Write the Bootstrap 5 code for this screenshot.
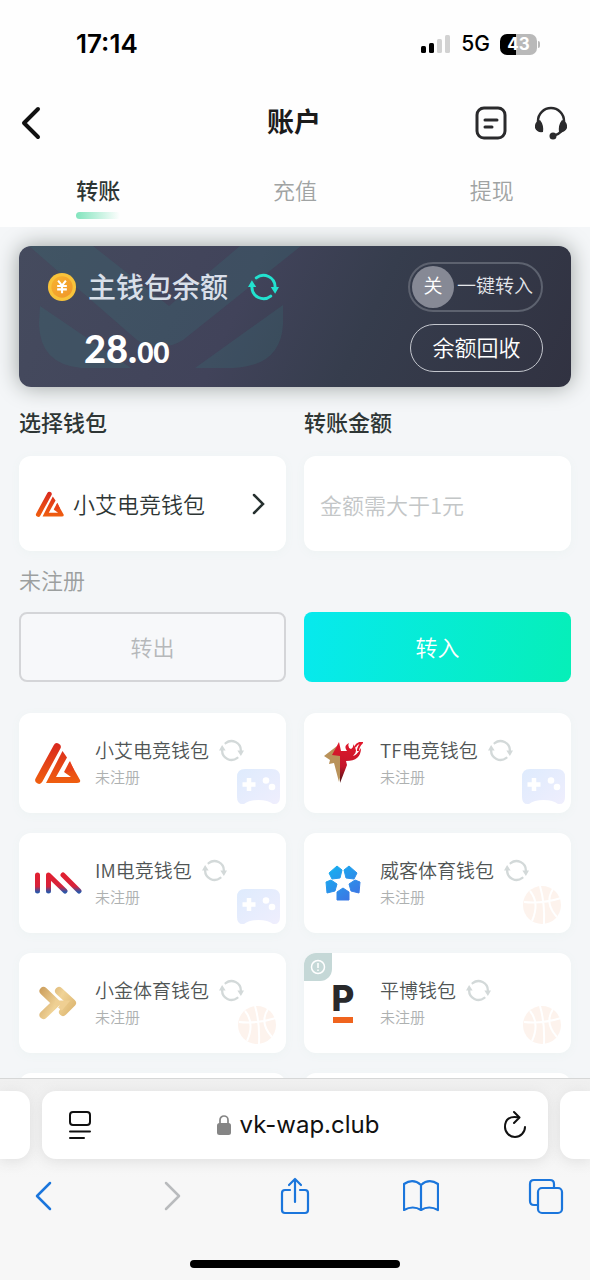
<!DOCTYPE html>
<html lang="zh-CN">
<head>
<meta charset="utf-8">
<meta name="viewport" content="width=device-width, initial-scale=1">
<title>账户</title>
<link href="https://cdn.jsdelivr.net/npm/bootstrap@5.3.0/dist/css/bootstrap.min.css" rel="stylesheet">
<style>
  body { font-family: "Noto Sans CJK SC", sans-serif; font-weight: 350; font-size: 22px; line-height: 32px; color: #2e3635; background: #fefefe; }
  button, input, select { font-weight: inherit; }
  svg { display: block; flex: none; }
  .latin { font-family: Inter, "Liberation Sans", sans-serif; }
  .plain { background: none; border: 0; padding: 0; color: inherit; }

  .status { height: 88px; padding: 0 50px 0 76px; color: #000; }
  .status-icons { gap: 10px; }
  .clock { font-size: 26px; font-weight: 600; }
  .network { font-size: 21px; font-weight: 500; }
  .battery { width: 37px; height: 21px; border-radius: 7px; background: linear-gradient(90deg, #000 43%, #b9b9b9 43%); color: #fff; font-size: 17px; font-weight: 700; line-height: 21px; }
  .battery-tip { width: 2px; height: 7px; margin-left: 1px; border-radius: 0 2px 2px 0; background: #b9b9b9; }

  .titlebar { height: 70px; padding: 0 22px 0 20px; }
  .titlebar > * { flex: 1 1 0; }
  .page-title { font-size: 27px; font-weight: 600; color: #1b1b1b; padding-bottom: 4px; }
  .title-actions { gap: 26px; }

  .tabs { height: 69px; }
  .tab-item { color: #a0a3a3; text-decoration: none; padding-top: 15px; }
  .tab-item.current { color: #2e3635; font-weight: 500; }
  .tab-item.current::after { content: ""; display: block; width: 44px; height: 7px; margin: 7px auto 0; border-radius: 4px; background: linear-gradient(90deg, #82e4bd, #fefefe); }

  .content { background: #f4f6f8; padding: 19px 19px 0; min-height: 0; }
  .balance { border-radius: 12px; padding: 16px 28px 15px; background: linear-gradient(115deg, #454b5e 0%, #41435a 40%, #363d4d 62%, #313241 100%); box-shadow: 0 0 22px #9aa09e; color: #fff; }
  .watermark { left: 0; top: 0; }
  .balance-name { font-size: 28px; font-weight: 500; color: #d9dfe9; margin: 0 20px 2px 11px; }
  .balance-refresh { color: #22e2cf; }
  .amount { font-family: Lato, sans-serif; font-weight: 900; font-size: 38px; padding-left: 37px; }
  .amount small { font-size: 28px; font-weight: 900; }
  .pill { height: 48px; border: 1px solid #c3c6cd; border-radius: 24px; padding-bottom: 4px; }
  .pill-switch { width: 135px; height: 50px; border: 2px solid #5d626f; border-radius: 25px; font-size: 19px; color: #e4e6ea; padding: 0 0 0 2px; }
  .knob { width: 42px; height: 42px; border-radius: 50%; background: #868995; line-height: 38px; color: #fff; }
  .knob + span { margin: 0 0 4px 3px; }
  .pill-recall { width: 133px; }

  .pair { display: grid; grid-template-columns: 1fr 1fr; column-gap: 18px; }
  .transfer { padding-top: 18px; }
  .field-label { font-weight: 500; }
  .fields { margin-top: 19px; }
  .field-box { height: 95px; border: 0; border-radius: 12px; background: #fff; box-shadow: 0 2px 10px #edf3f3; }
  .picker { appearance: none; min-width: 0; outline: 0; padding-bottom: 2px; }
  .amount-input { padding: 0 16px; width: 100%; outline: 0; }
  .amount-input::placeholder { color: #c3c6c7; }
  .muted { color: #9c9f9f; margin: 12px 0 17px; }
  .action { height: 70px; border-radius: 8px; padding-bottom: 4px; }
  .action-out { background: #f7f8fa; border: 2px solid #d4d5d8; color: #b6b8ba; }
  .action-in { border: 0; background: linear-gradient(100deg, #07e9ee, #06efb8); color: #fff; }

  .wallets { row-gap: 20px; margin-top: 31px; }
  .wallet { height: 100px; border-radius: 12px; background: #fff; box-shadow: 0 2px 10px #edf3f3; padding: 0 15px; color: #505555; }
  .logo-box { width: 48px; margin-right: 13px; }
  .wallet-name { font-size: 19px; line-height: 28px; }
  .wallet-state { font-size: 15px; line-height: 26px; color: #aeb1b1; }
  .wallet-refresh { color: #d3d9d9; margin-left: 10px; }
  .decor { right: 6px; bottom: 8px; }
  .notice { left: 0; top: 0; width: 28px; height: 28px; background: #c5d8d7; border-radius: 12px 0 12px 0; }
  .pin-letter { font-size: 35px; line-height: 28px; font-weight: 800; color: #29292b; }
  .pin-bar { width: 20px; height: 6px; margin-top: 5px; background: #f0641e; }

  .browser { height: 202px; background: linear-gradient(#f0f0f0, #f7f7f7 50%); border-top: 1px solid #d6d7d7; padding-top: 12px; color: #111; }
  .address-row { gap: 12px; }
  .address { height: 68px; border-radius: 14px; background: #fff; box-shadow: 0 2px 14px #dedede; }
  .address-main { padding: 0 21px 0 26px; }
  .neighbour-left { width: 30px; border-radius: 0 14px 14px 0; }
  .neighbour-right { width: 30px; border-radius: 14px 0 0 14px; }
  .url { font-size: 24px; font-weight: 400; }
  .toolbar-row { height: 74px; padding: 0 26px; color: #1b76dc; }
  .toolbar-row .inactive { color: #b9bbbd; }
  .home-line { width: 210px; height: 8px; border-radius: 4px; background: #000; margin: 27px auto 0; }
</style>
</head>
<body>
<svg width="0" height="0" class="position-absolute" aria-hidden="true">
  <defs>
    <linearGradient id="fire" gradientUnits="userSpaceOnUse" x1="0" y1="0" x2="0" y2="42"><stop offset="0" stop-color="#d8261f"/><stop offset="1" stop-color="#f0600f"/></linearGradient>
    <linearGradient id="padFill" x1="0" y1="0" x2="1" y2="1"><stop offset="0" stop-color="#deebfd"/><stop offset="1" stop-color="#efeefd"/></linearGradient>
    <linearGradient id="imFill" gradientUnits="userSpaceOnUse" x1="0" y1="0" x2="0" y2="22"><stop offset="0" stop-color="#e2202f"/><stop offset=".65" stop-color="#d8223a"/><stop offset=".9" stop-color="#2d56a8"/></linearGradient>
    <linearGradient id="goldFill" gradientUnits="userSpaceOnUse" x1="0" y1="0" x2="38" y2="22"><stop offset="0" stop-color="#c99a58"/><stop offset=".55" stop-color="#f0d397"/><stop offset="1" stop-color="#dcb56f"/></linearGradient>
    <linearGradient id="blueFill" gradientUnits="userSpaceOnUse" x1="0" y1="0" x2="24" y2="34"><stop offset="0" stop-color="#12b6f2"/><stop offset="1" stop-color="#3b78e4"/></linearGradient>
    <linearGradient id="coinFill" x1="0" y1="0" x2="1" y2="1"><stop offset="0" stop-color="#f7b32f"/><stop offset="1" stop-color="#f0952a"/></linearGradient>
    <linearGradient id="tfFill" x1="0" y1="0" x2="0" y2="1"><stop offset="0" stop-color="#e0182c"/><stop offset=".6" stop-color="#c4162a"/><stop offset="1" stop-color="#4a1214"/></linearGradient>
    <symbol id="refresh" viewBox="0 0 32 28">
      <path d="M8.500 4.600A12 12 0 0 1 28 14M23.500 23.400A12 12 0 0 1 4 14" fill="none" stroke="currentColor" stroke-width="3" stroke-linecap="round"/>
      <path d="M23.500 14H32l-4 7zM0 14h8.500L4 7z" fill="currentColor"/>
    </symbol>
    <symbol id="ai" viewBox="0 0 46 42">
      <path d="M4 38L22 5" stroke="url(#fire)" stroke-width="7.500" stroke-linecap="round"/>
      <path d="M27.500 9L32 15.500 21 35H36L29 30 34.500 19.500 45 38Q46 41 42 41H11Z" fill="url(#fire)"/>
      <path d="M35 19L39 28 30 31Z" fill="#e8401a"/>
    </symbol>
    <symbol id="pad" viewBox="0 0 43 36">
      <path d="M8 0H35Q43 0 43 8V28Q43 36 36 35 31 31 21.500 31T7 35Q0 36 0 28V8Q0 0 8 0Z" fill="url(#padFill)"/>
      <path d="M12 9v13M5.500 15.500h13" stroke="#fff" stroke-width="4.500"/>
      <circle cx="29" cy="11.500" r="3.300" fill="#fff"/><circle cx="35" cy="18" r="3.300" fill="#fff"/>
    </symbol>
    <symbol id="ball" viewBox="0 0 43 40">
      <circle cx="20" cy="20" r="19" fill="#fdf3ed"/>
      <path d="M2 17Q20 19 39 13M18 1Q23 18 22 39M8 6Q18 18 10 36M31 4Q22 18 35 32" fill="none" stroke="#fff" stroke-width="2"/>
    </symbol>
  </defs>
</svg>

<div class="d-flex flex-column vh-100 overflow-hidden">
  <div class="status latin flex-shrink-0 d-flex align-items-center justify-content-between">
    <span class="clock">17:14</span>
    <div class="status-icons d-flex align-items-center">
      <svg width="30" height="20" viewBox="0 0 30 20"><g fill="#000"><rect x="0" y="12" width="5" height="7" rx="1.500"/><rect x="8" y="9" width="5" height="10" rx="1.500"/></g><g fill="#d2d2d2"><rect x="16" y="5" width="5" height="14" rx="1.500"/><rect x="24" y="1" width="5" height="18" rx="1.500"/></g></svg>
      <span class="network">5G</span>
      <div class="d-flex align-items-center"><span class="battery text-center">43</span><span class="battery-tip"></span></div>
    </div>
  </div>

  <header class="titlebar flex-shrink-0 d-flex align-items-center">
    <div class="d-flex"><button class="plain" aria-label="返回"><svg width="22" height="34" viewBox="0 0 22 34"><path d="M18 3L4 17l14 14" fill="none" stroke="#111" stroke-width="4" stroke-linecap="round" stroke-linejoin="round"/></svg></button></div>
    <h1 class="page-title text-center mb-0">账户</h1>
    <div class="title-actions d-flex justify-content-end">
      <button class="plain" aria-label="记录"><svg width="34" height="34" viewBox="0 0 34 34" fill="none" stroke="#2a2a2c" stroke-width="3" stroke-linecap="round"><rect x="3" y="2" width="28" height="30" rx="7"/><path d="M11 14h12M11 21h7"/></svg></button>
      <button class="plain" aria-label="客服"><svg width="34" height="34" viewBox="0 0 34 34"><path d="M4 18V15a13 13 0 0 1 26 0v3q0 9-11 12" fill="none" stroke="#2a2a2c" stroke-width="2.500"/><path d="M6 14q4 5 3 12-6 1-8-4-1-6 5-8ZM28 14q-4 5-3 12 6 1 8-4 1-6-5-8Z" fill="#2a2a2c"/><circle cx="19" cy="30" r="3.500" fill="#2a2a2c"/></svg></button>
    </div>
  </header>

  <nav class="tabs flex-shrink-0 d-flex text-center">
    <a class="tab-item current col-4" href="#" aria-current="page">转账</a>
    <a class="tab-item col-4" href="#">充值</a>
    <a class="tab-item col-4" href="#">提现</a>
  </nav>

  <main class="content flex-fill overflow-hidden">
    <section class="balance position-relative d-flex justify-content-between">
      <svg class="watermark position-absolute" width="285" height="125" viewBox="0 0 285 125" fill="#37777a" fill-opacity=".24"><path d="M10 0H74L150 60 221 0H282L164 94Q141 108 118 94Z"/><path d="M21 60L112 122H62Q21 118 20 78ZM264 59L176 122H214Q262 120 264 78Z"/></svg>
      <div class="position-relative">
        <div class="d-flex align-items-center mt-2">
          <svg width="30" height="30" viewBox="0 0 31 31"><circle cx="15.500" cy="15.500" r="14.500" fill="#f8c33b"/><circle cx="15.500" cy="15.500" r="11" fill="url(#coinFill)"/><path d="M11.500 9l4 5 4-5M10.500 14.500h10M10.500 18h10M15.500 14v8" fill="none" stroke="#fff" stroke-width="2.200"/></svg>
          <span class="balance-name">主钱包余额</span>
          <button class="plain balance-refresh" aria-label="刷新余额"><svg width="31" height="28"><use href="#refresh"/></svg></button>
        </div>
        <div class="amount mt-4 pt-1">28.<small>00</small></div>
      </div>
      <div class="d-flex flex-column align-items-end gap-2 position-relative">
        <button class="plain pill-switch d-flex align-items-center" role="switch" aria-checked="false"><span class="knob">关</span><span>一键转入</span></button>
        <button class="plain pill pill-recall mt-1">余额回收</button>
      </div>
    </section>

    <form class="transfer">
      <div class="pair">
        <label class="field-label" for="wallet">选择钱包</label>
        <label class="field-label" for="sum">转账金额</label>
      </div>
      <div class="pair fields">
        <div class="field-box d-flex align-items-center ps-3 pe-3">
          <svg width="30" height="26"><use href="#ai"/></svg>
          <select id="wallet" class="plain picker flex-fill ms-2"><option>小艾电竞钱包</option><option>TF电竞钱包</option><option>IM电竞钱包</option><option>威客体育钱包</option><option>小金体育钱包</option><option>平博钱包</option></select>
          <svg width="24" height="24" viewBox="0 0 24 24"><path d="M8 3l9 9-9 9" fill="none" stroke="#26302f" stroke-width="2.500" stroke-linecap="round"/></svg>
        </div>
        <input id="sum" class="field-box amount-input" type="text" inputmode="decimal" placeholder="金额需大于1元">
      </div>
      <p class="muted">未注册</p>
      <div class="pair">
        <button type="button" class="action action-out">转出</button>
        <button type="button" class="action action-in">转入</button>
      </div>
    </form>

    <section class="pair wallets">
      <article class="wallet position-relative d-flex align-items-center">
        <div class="logo-box d-flex justify-content-center"><svg width="48" height="42"><use href="#ai"/></svg></div>
        <div>
          <div class="d-flex align-items-center"><span class="wallet-name">小艾电竞钱包</span><button class="plain wallet-refresh" aria-label="刷新"><svg width="25" height="23"><use href="#refresh"/></svg></button></div>
          <div class="wallet-state">未注册</div>
        </div>
        <svg class="decor position-absolute" width="43" height="36"><use href="#pad"/></svg>
      </article>

      <article class="wallet position-relative d-flex align-items-center">
        <div class="logo-box d-flex justify-content-center"><svg width="40" height="42" viewBox="0 0 40 42"><path d="M1 14L14 4 12 9 18 10 19 26 16 40 11 21 6 22 7 18Z" fill="#b9925a"/><path d="M16 0L18 9H24Q20 4 26 1 24 5 28 7 31 5 30 2 36 9 30 14 34 13 38 6 38 19 23 19L24 23 17 41 17 14 9 13Z" fill="url(#tfFill)"/><path d="M32 5Q34 1 40 0 35 4 35 9" fill="none" stroke="#e0182c" stroke-width="2"/></svg></div>
        <div>
          <div class="d-flex align-items-center"><span class="wallet-name">TF电竞钱包</span><button class="plain wallet-refresh" aria-label="刷新"><svg width="25" height="23"><use href="#refresh"/></svg></button></div>
          <div class="wallet-state">未注册</div>
        </div>
        <svg class="decor position-absolute" width="43" height="36"><use href="#pad"/></svg>
      </article>

      <article class="wallet position-relative d-flex align-items-center">
        <div class="logo-box d-flex justify-content-center"><svg width="48" height="22" viewBox="0 0 48 22"><path d="M3.500 3v16.010M14.500 19V3L31 19M29 3L45 19" fill="none" stroke="url(#imFill)" stroke-width="5" stroke-linecap="round" stroke-linejoin="round"/></svg></div>
        <div>
          <div class="d-flex align-items-center"><span class="wallet-name">IM电竞钱包</span><button class="plain wallet-refresh" aria-label="刷新"><svg width="25" height="23"><use href="#refresh"/></svg></button></div>
          <div class="wallet-state">未注册</div>
        </div>
        <svg class="decor position-absolute" width="43" height="36"><use href="#pad"/></svg>
      </article>

      <article class="wallet position-relative d-flex align-items-center">
        <div class="logo-box d-flex justify-content-center"><svg width="36" height="36" viewBox="0 0 36 36" fill="url(#blueFill)" stroke="url(#blueFill)"><path d="M4 8L12 1 17 5 15 13 7 14ZM32 8L24 1 19 5 21 13 29 14ZM1 17L6 15 12 19 10 26 2 28ZM35 17L30 15 24 19 26 26 34 28ZM18 23L24 27V35H12V27Z"/></svg></div>
        <div>
          <div class="d-flex align-items-center"><span class="wallet-name">威客体育钱包</span><button class="plain wallet-refresh" aria-label="刷新"><svg width="25" height="23"><use href="#refresh"/></svg></button></div>
          <div class="wallet-state">未注册</div>
        </div>
        <svg class="decor position-absolute" width="43" height="40"><use href="#ball"/></svg>
      </article>

      <article class="wallet position-relative d-flex align-items-center">
        <div class="logo-box d-flex justify-content-center"><svg width="38" height="34" viewBox="0 0 38 34"><path d="M4.500 5L17 17 4.500 29M20 5L33 17 24 26" fill="none" stroke="url(#goldFill)" stroke-width="8" stroke-linecap="round" stroke-linejoin="round"/><path d="M16 17H26L21 23" fill="none" stroke="#efcf92" stroke-width="5"/></svg></div>
        <div>
          <div class="d-flex align-items-center"><span class="wallet-name">小金体育钱包</span><button class="plain wallet-refresh" aria-label="刷新"><svg width="25" height="23"><use href="#refresh"/></svg></button></div>
          <div class="wallet-state">未注册</div>
        </div>
        <svg class="decor position-absolute" width="43" height="40"><use href="#ball"/></svg>
      </article>

      <article class="wallet position-relative d-flex align-items-center">
        <span class="notice position-absolute d-flex align-items-center justify-content-center"><svg width="16" height="16" viewBox="0 0 16 16" fill="none" stroke="#fff" stroke-width="1.500"><circle cx="8" cy="8" r="6.500"/><path d="M8 4v5M8 10.500v1.500"/></svg></span>
        <div class="logo-box d-flex flex-column align-items-center"><span class="pin-letter latin">P</span><span class="pin-bar"></span></div>
        <div>
          <div class="d-flex align-items-center"><span class="wallet-name">平博钱包</span><button class="plain wallet-refresh" aria-label="刷新"><svg width="25" height="23"><use href="#refresh"/></svg></button></div>
          <div class="wallet-state">未注册</div>
        </div>
        <svg class="decor position-absolute" width="43" height="40"><use href="#ball"/></svg>
      </article>

      <article class="wallet"></article>
      <article class="wallet"></article>
    </section>
  </main>

  <footer class="browser flex-shrink-0">
    <div class="address-row d-flex">
      <div class="address neighbour-left"></div>
      <div class="address address-main flex-fill d-flex align-items-center justify-content-between">
        <button class="plain" aria-label="页面设置"><svg width="24" height="30" viewBox="0 0 24 30" fill="none" stroke="#111" stroke-width="2" stroke-linecap="round"><rect x="2" y="2" width="20" height="13" rx="3"/><path d="M2 21.500h20M2 28h14"/></svg></button>
        <button class="plain url latin d-flex align-items-center gap-2"><svg width="16" height="22" viewBox="0 0 16 22"><path d="M4 10V6a4 4 0 0 1 8 0v4" fill="none" stroke="#858585" stroke-width="1.700"/><rect x="1" y="9" width="14" height="12" rx="2.500" fill="#858585"/></svg>vk-wap.club</button>
        <button class="plain" aria-label="重新载入"><svg width="24" height="30" viewBox="0 0 24 30" fill="none" stroke="#111" stroke-width="2" stroke-linecap="round" stroke-linejoin="round"><path d="M16 7.500Q2 5 2 17a10 10 0 0 0 20 0M11 2l5.500 5.500-5.500 5.500"/></svg></button>
      </div>
      <div class="address neighbour-right"></div>
    </div>
    <div class="toolbar-row d-flex align-items-center justify-content-between">
      <button class="plain" aria-label="后退"><svg width="36" height="36" viewBox="0 0 36 36" fill="none" stroke="currentColor" stroke-width="2.500" stroke-linecap="round" stroke-linejoin="round"><path d="M24 5L11 18l13 13"/></svg></button>
      <button class="plain inactive" aria-label="前进"><svg width="36" height="36" viewBox="0 0 36 36" fill="none" stroke="currentColor" stroke-width="2.500" stroke-linecap="round" stroke-linejoin="round"><path d="M14 5l13 13-13 13"/></svg></button>
      <button class="plain" aria-label="分享"><svg width="36" height="38" viewBox="0 0 36 38" fill="none" stroke="currentColor" stroke-width="2.200" stroke-linecap="round" stroke-linejoin="round"><path d="M13 13H8q-3 0-3 3v17q0 3 3 3h20q3 0 3-3V16q0-3-3-3h-5M18 25V2M12 8l6-6 6 6"/></svg></button>
      <button class="plain" aria-label="书签"><svg width="36" height="34" viewBox="0 0 36 34" fill="none" stroke="currentColor" stroke-width="2.200" stroke-linejoin="round"><path d="M18 6Q10-1 1 5V31Q10 26 18 31 26 26 35 31V5Q26-1 18 6ZM18 6V31"/></svg></button>
      <button class="plain" aria-label="标签页"><svg width="36" height="38" viewBox="0 0 36 38" fill="none" stroke="currentColor" stroke-width="2.200"><rect x="10" y="11" width="24" height="25" rx="4"/><path d="M10 28H6q-4 0-4-4V7q0-4 4-4h16q4 0 4 4v4"/></svg></button>
    </div>
    <div class="home-line"></div>
  </footer>
</div>
<script src="https://cdn.jsdelivr.net/npm/bootstrap@5.3.0/dist/js/bootstrap.bundle.min.js"></script>
</body>
</html>
